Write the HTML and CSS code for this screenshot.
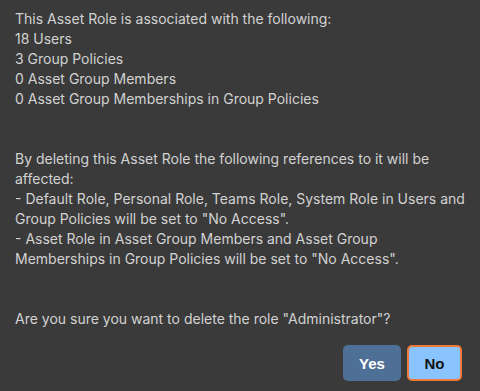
FILE: index.html
```html
<!DOCTYPE html>
<html lang="en">

<head>
    <meta charset="UTF-8">
    <meta name="viewport" content="width=device-width, initial-scale=1.0">
    <title>Delete Asset Role</title>
    <link rel="stylesheet" href="styles.css">
</head>

<body>
    <div class="dialog">
        <div class="message">
            <p>This Asset Role is associated with the following:<br>
                18 Users<br>
                3 Group Policies<br>
                0 Asset Group Members<br>
                0 Asset Group Memberships in Group Policies</p>
            <p>By deleting this Asset Role the following references to it will be affected:<br>
                - Default Role, Personal Role, Teams Role, System Role in Users and Group Policies will be set to "No Access".<br>
                - Asset Role in Asset Group Members and Asset Group Memberships in Group Policies will be set to "No Access".</p>
            <p>Are you sure you want to delete the role "Administrator"?</p>
        </div>
        <div class="buttons">
            <button class="btn yes">Yes</button>
            <button class="btn no">No</button>
        </div>
    </div>
</body>

</html>
```

FILE: styles.css
```css
body {
    margin: 0;
    padding: 0;
    background-color: #3a3a3a;
}

.dialog {
    width: 480px;
    height: 391px;
    box-sizing: border-box;
    padding: 9px 10px 10px 15px;
    font-family: Inter, "Liberation Sans", sans-serif;
    font-size: 14px;
    line-height: 20px;
    color: #d2d2d2;
}

.message p {
    margin: 0 0 40px 0;
}

.message p:last-child {
    margin-bottom: 16px;
}

.buttons {
    display: flex;
    justify-content: flex-end;
    gap: 6px;
    padding-right: 8px;
}

.btn {
    height: 36px;
    border-radius: 5px;
    font-family: "Liberation Sans", Arial, sans-serif;
    font-weight: bold;
    font-size: 15px;
    cursor: pointer;
}

.yes {
    width: 58px;
    border: none;
    background-color: #4e6f96;
    color: #fff;
}

.no {
    width: 55px;
    border: 2px solid #f07a3a;
    background-color: #8ac4ff;
    color: #111;
}
```
